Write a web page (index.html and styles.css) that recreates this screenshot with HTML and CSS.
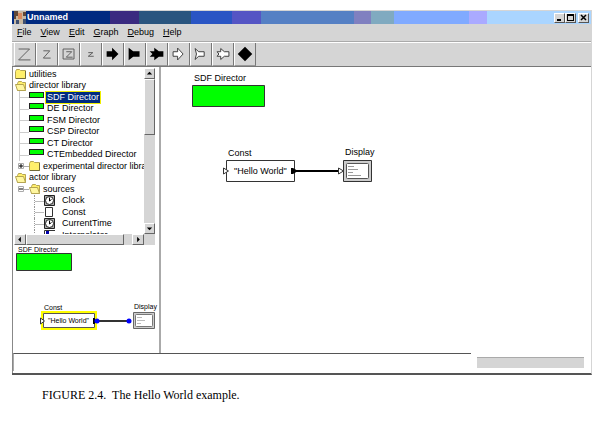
FILE: index.html
```html
<!DOCTYPE html>
<html lang="en">
<head>
<meta charset="utf-8">
<title>Unnamed</title>
<link rel="stylesheet" href="styles.css">
</head>
<body>
<figure class="figure">
<div class="window">
  <header class="titlebar">
    <svg class="app-icon" viewBox="0 0 12 13"><path fill="#c8b8a0" d="M0 0h12v13H0z"/><path fill="#604838" d="M0 0h4v5H2v3H0zM9 1h3v4H9z"/><path fill="#d8885c" d="M4 2h4v6H4z"/><path fill="#405070" d="M2 9h3v4H2zM9 8h3v5H9z"/></svg>
    <h1 class="title">Unnamed</h1>
    <div class="window-buttons">
      <button class="win" aria-label="Minimize"><svg viewBox="0 0 9 8"><path d="M2 5h4v2H2z"/></svg></button>
      <button class="win" aria-label="Maximize"><svg viewBox="0 0 9 8"><path d="M1 0h7v7H1zM2 2v4h5V2z" fill-rule="evenodd"/></svg></button>
      <button class="win win-close" aria-label="Close"><svg viewBox="0 0 9 8"><path d="M2 1l5 5M7 1L2 6" stroke="#000" stroke-width="1.500"/></svg></button>
    </div>
  </header>
  <nav class="menubar">
    <button><u>F</u>ile</button><button><u>V</u>iew</button><button><u>E</u>dit</button><button><u>G</u>raph</button><button><u>D</u>ebug</button><button><u>H</u>elp</button>
  </nav>
  <div class="toolbar">
    <button aria-label="Zoom in"><svg viewBox="0 0 22 22"><path class="thin" d="M4 5.500h12L4 17.500h13"/></svg></button>
    <button aria-label="Zoom reset"><svg viewBox="0 0 22 22"><path class="mid" d="M7 7.500h7L7 15.500h8"/></svg></button>
    <button aria-label="Zoom fit"><svg viewBox="0 0 22 22"><path class="mid" d="M4.500 5.500h12v11h-12zM8 8.500h6L8 14.500h7"/></svg></button>
    <button aria-label="Zoom out"><svg viewBox="0 0 22 22"><path class="mid" d="M8 9.500h5L8 13.500h6"/></svg></button>
    <button aria-label="Input port"><svg viewBox="0 0 22 22"><path d="M4 8h6V4l7 7-7 7v-4H4z"/></svg></button>
    <button aria-label="Output port"><svg viewBox="0 0 22 22"><path d="M4 4l5 4h7v6H9l-5 4z"/></svg></button>
    <button aria-label="Input/output port"><svg viewBox="0 0 22 22"><path d="M3 8h5V4l5 4h5v6h-5l-5 4v-4H3l3-3z"/></svg></button>
    <button aria-label="Input multiport"><svg viewBox="0 0 22 22"><path class="hollow" d="M4.500 8.500h5v-4l6 6.500-6 6.500v-4h-5z"/></svg></button>
    <button aria-label="Output multiport"><svg viewBox="0 0 22 22"><path class="hollow" d="M4.500 5l4 3.500h6v5h-6l-4 3.500 1.500-6z"/></svg></button>
    <button aria-label="Input/output multiport"><svg viewBox="0 0 22 22"><path class="hollow" d="M4.500 8.500h4V5l4 3.500h5v5h-5l-4 3.500v-3.500h-4l2-2.500z"/></svg></button>
    <button aria-label="New relation"><svg viewBox="0 0 22 22"><path d="M11 3l8 8-8 8-8-8z"/></svg></button>
  </div>
  <main class="body">
    <aside class="side">
      <div class="tree-pane">
        <ul class="tree">
          <li><svg class="folder" viewBox="0 0 11 10"><use href="#folder"/></svg>utilities</li>
          <li><svg class="folder" viewBox="0 0 11 10"><use href="#open"/></svg>director library</li>
          <li class="leaf"><i class="green"></i><span class="selected">SDF Director</span></li>
          <li class="leaf"><i class="green"></i><span>DE Director</span></li>
          <li class="leaf"><i class="green"></i><span>FSM Director</span></li>
          <li class="leaf"><i class="green"></i><span>CSP Director</span></li>
          <li class="leaf"><i class="green"></i><span>CT Director</span></li>
          <li class="leaf"><i class="green"></i><span>CTEmbedded Director</span></li>
          <li class="branch"><svg class="knob" viewBox="0 0 14 12"><path d="M3.500 3.500h5v5h-5zM9 6.500h5" class="line"/><path d="M4 6h4M6 4v4" class="sign"/></svg><svg class="folder" viewBox="0 0 11 10"><use href="#folder"/></svg>experimental director library</li>
          <li><svg class="folder" viewBox="0 0 11 10"><use href="#open"/></svg>actor library</li>
          <li class="branch"><svg class="knob" viewBox="0 0 14 12"><path d="M3.500 3.500h5v5h-5zM9 6.500h5" class="line"/><path d="M4 6h4" class="sign"/></svg><svg class="folder" viewBox="0 0 11 10"><use href="#open"/></svg>sources</li>
          <li class="actor"><svg viewBox="0 0 11 11"><use href="#clock"/></svg>Clock</li>
          <li class="actor"><svg viewBox="0 0 11 11"><path class="box" d="M1.500.500h7v9h-7z"/></svg>Const</li>
          <li class="actor"><svg viewBox="0 0 11 11"><use href="#clock"/></svg>CurrentTime</li>
          <li class="actor"><svg viewBox="0 0 11 11"><path class="box" d="M.500.500h12v10H.500z"/><path d="M2 1h3v3H2z" fill="#00a"/></svg>Interpolator</li>
        </ul>
        <div class="vscroll"><button aria-label="Scroll up"><svg viewBox="0 0 10 10"><path d="M5 3l3 3H2z"/></svg></button><div class="vthumb"></div><div class="track"></div><button aria-label="Scroll down"><svg viewBox="0 0 10 10"><path d="M5 7l3-3H2z"/></svg></button></div>
        <div class="hscroll"><button aria-label="Scroll left"><svg viewBox="0 0 10 10"><path d="M3 5l3-3v6z"/></svg></button><div class="hthumb"></div><div class="track"></div><button aria-label="Scroll right"><svg viewBox="0 0 10 10"><path d="M7 5L4 2v6z"/></svg></button></div>
        <div class="corner"></div>
      </div>
      <svg class="overview" viewBox="0 0 145 107" role="img" aria-label="Graph overview">
        <text x="4" y="7">SDF Director</text>
        <path class="director" d="M2.500 8.500h55v17h-55z"/>
        <text x="30" y="65">Const</text>
        <path d="M28 67h54v17H28z" fill="#fff" stroke="#ff0" stroke-width="2"/>
        <path d="M29.500 68.500h51v14h-51z" fill="none" stroke="#555"/>
        <text x="34" y="78">"Hello World"</text>
        <path d="M26.500 73l4 3-4 3z" fill="#fff" stroke="#333"/>
        <path d="M83 76h34" stroke="#333" stroke-width="2"/>
        <path d="M79 73h2v6h-2z"/><circle cx="83" cy="76" r="2.500" fill="#00f"/><circle cx="115" cy="76" r="2.500" fill="#00f"/>
        <text x="120" y="64">Display</text>
        <path d="M119.500 67.500h21v16h-21z" fill="#ccc" stroke="#666"/><rect x="121.500" y="69.500" width="17" height="12" rx="1" fill="#fff" stroke="#777"/>
        <path d="M123 72.500h5M123 75.500h8M123 78.500h4" stroke="#bbb"/>
      </svg>
    </aside>
    <section class="canvas">
      <svg viewBox="0 0 429 286" role="img" aria-label="Hello World graph">
        <text x="33" y="14">SDF Director</text>
        <path class="director" d="M31.500 18.500h72v21h-72z"/>
        <text x="67" y="89">Const</text>
        <path class="box" d="M65.500 93.500h68v21h-68z"/>
        <text x="73" y="107">"Hello World"</text>
        <path class="box" d="M62.500 101l5 3-5 3z"/>
        <path d="M130 101h2l5 3-5 3h-2z"/>
        <path d="M133 104h46" stroke="#000" stroke-width="2"/>
        <text x="184" y="88">Display</text>
        <path d="M182.500 93.500h28v21h-28z" fill="#ccc" stroke="#333"/>
        <rect x="185.500" y="96.500" width="22" height="15" rx="1" fill="#fff" stroke="#555"/>
        <path d="M187 99.500h6M187 102.500h10M187 105.500h5M187 108.500h13" stroke="#999"/>
        <path class="box" d="M177.500 101l5 3-5 3z"/>
      </svg>
    </section>
  </main>
  <footer class="status"><div class="message"></div><div class="progress"></div></footer>
</div>
<figcaption>FIGURE 2.4.&nbsp; The Hello World example.</figcaption>
</figure>
<svg class="defs" aria-hidden="true"><defs>
  <g id="folder"><path d="M.500 2.500l1-2h3l1 1h5v8H.500z" fill="#ffef6b" stroke="#b5a552"/><path d="M10.500 2v7.500H1" fill="none" stroke="#736b39"/></g>
  <g id="open"><path d="M2.500 2.500l1-2h3l1 1h3v8h-8z" fill="#ffef6b" stroke="#b5a552"/><path d="M.500 3.500h8l2 6h-8z" fill="#fff7a0" stroke="#b5a552"/></g>
  <g id="clock"><path d="M.500.500h10v10H.500z" fill="#aaa" stroke="#222"/><circle cx="5.500" cy="5.500" r="4" fill="#fff" stroke="#222"/><path d="M5.500 2.500v3.500l2-1.500" fill="none" stroke="#000"/></g>
</defs></svg>
</body>
</html>
```
FILE: styles.css
```css
* { box-sizing: border-box; }
body { margin: 0; background: #fff; color: #000; font: 9px/12px "Liberation Sans", Arial, sans-serif; }
button { font: inherit; color: inherit; border: 0; padding: 0; margin: 0; background: #d5d5d5; }
svg { display: block; }
.defs { position: absolute; width: 0; height: 0; }
.figure { margin: 10px 8px 0 12px; }
.window { display: flex; flex-direction: column; border: 1px solid #d5d5d5; border-bottom: 2px solid #555; border-left: 0; }
.titlebar { display: flex; align-items: center; height: 13px; padding: 0 2px; background: linear-gradient(90deg, #002a80 17%, #3a2a80 17% 22%, #2a557f 22% 31%, #2a55c4 31% 38%, #5555c4 38% 43%, #5580c4 43% 59%, #8080c0 59% 62%, #80aac0 62% 66%, #80aaff 66% 79%, #aaaaff 79% 82%, #aad5ff 82%); }
.app-icon { width: 12px; height: 13px; margin-right: 1px; }
.title { flex: 1; margin: 0; font-size: 9px; line-height: 13px; color: #fff; }
.window-buttons { display: flex; }
.win { width: 11px; height: 10px; border: 1px solid; border-color: #fff #555 #555 #fff; }
.win-close { margin-left: 2px; }
.win svg { width: 100%; height: 100%; }
.menubar { display: flex; gap: 9px; height: 18px; padding: 2px 5px; background: #d5d5d5; border-bottom: 1px solid #aaa; }
.menubar button { line-height: 13px; }
u { text-underline-offset: 1px; }
.toolbar { display: flex; height: 25px; padding-left: 2px; background: #d5d5d5; border-top: 1px solid #fff; border-bottom: 1px solid #777; }
.toolbar button { width: 22px; height: 23px; border-right: 1px solid #777; border-bottom: 1px solid #999; border-left: 1px solid #fff; }
.toolbar svg { width: 100%; height: 100%; }
.thin, .mid { fill: none; stroke: #555; }
.hollow, .box { fill: #fff; stroke: #333; }
.body { display: flex; height: 286px; border-left: 1px solid #888; }
.side { width: 148px; padding-top: 1px; border-right: 2px solid #aaa; }
.tree-pane { display: grid; grid-template: 166px 11px / minmax(0, 1fr) 11px; margin: 0 4px 0 1px; }
.tree { margin: 0; padding: 0 0 0 1px; list-style: none; overflow: hidden; white-space: nowrap; line-height: 11px; }
.tree li { display: flex; align-items: center; height: 12px; }
.tree li:nth-child(even) { height: 11px; }
.folder { width: 11px; height: 10px; margin-right: 3px; flex: none; }
.leaf { padding-left: 4px; }
.leaf::before { content: ""; flex: none; width: 9px; height: 12px; border-left: 1px solid #ccc; background: linear-gradient(#ccc, #ccc) 0 6px / 100% 1px no-repeat; }
.green { flex: none; width: 15px; height: 6px; margin: 0 3px 5px 0; background: #0f0; border: 1px solid #222; }
.selected { background: #002a80; color: #fff; outline: 1px solid #ee0; padding: 0 1px; margin: 0 -1px; }
.knob { flex: none; width: 14px; height: 12px; }
.line { fill: none; stroke: #aaa; }
.sign { stroke: #000; }
.actor { padding-left: 19px; }
.actor::before { content: ""; flex: none; width: 9px; height: 12px; border-left: 1px dotted #999; background: linear-gradient(#bbb, #bbb) 0 6px / 100% 1px no-repeat; }
.actor svg { flex: none; width: 11px; height: 11px; margin-right: 7px; }
.vscroll, .hscroll, .corner { display: flex; background: #d5d5d5; }
.vscroll { flex-direction: column; }
.vscroll button, .hscroll button, .vthumb, .hthumb { border: 1px solid; border-color: #fff #666 #666 #fff; background: #d5d5d5; }
.vscroll button { height: 11px; }
.hscroll button { width: 12px; }
.vscroll button svg, .hscroll button svg { width: 100%; height: 100%; }
.vthumb { flex: 0 0 34%; }
.hthumb { flex: 0 0 75%; }
.track { flex: 1; }
text { font-size: 9px; }
.overview { width: 145px; height: 107px; margin-left: 1px; }
.overview text { font-size: 7px; }
.director { fill: #0f0; stroke: #333; }
.canvas { flex: 1; min-width: 0; overflow: hidden; }
.canvas svg { width: 429px; height: 286px; }
.status { display: flex; align-items: flex-start; gap: 6px; height: 20px; padding-right: 7px; border-left: 1px solid #888; }
.message { flex: 1; height: 18px; border-top: 1px solid #555; border-left: 1px solid #aaa; }
.progress { width: 107px; height: 11px; margin-top: 4px; background: #d5d5d5; border-top: 1px solid #aaa; }
figcaption { margin: 12px 0 0 30px; font: 12px/16px "Liberation Serif", "Times New Roman", serif; }
```
